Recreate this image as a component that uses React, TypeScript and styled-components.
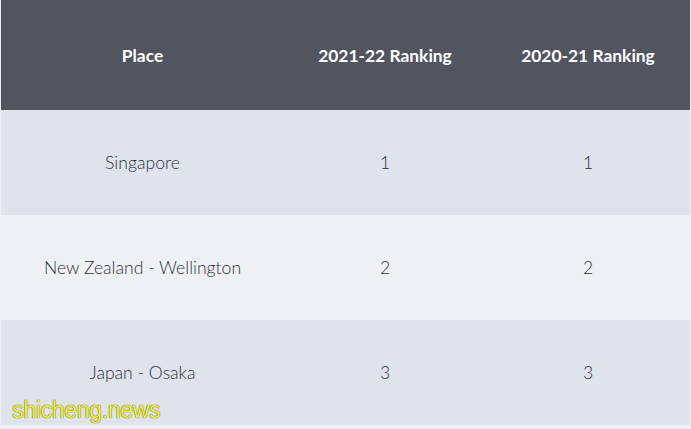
import * as React from 'react'
import styled, { createGlobalStyle } from 'styled-components'

const GlobalStyle = createGlobalStyle`
  html, body {
    margin: 0;
    padding: 0;
    background: #eef0f4;
  }
`

const Page = styled.div`
  position: relative;
  width: 691px;
  height: 429px;
  overflow: hidden;
  background: #eef0f4;
  font-family: 'Lato', 'Liberation Sans', sans-serif;
`

const Table = styled.table`
  margin-left: 1px;
  width: 689px;
  border-collapse: collapse;
  table-layout: fixed;
`

const HeadCell = styled.th<{ $width: number }>`
  width: ${(p) => p.$width}px;
  height: 110px;
  padding: 0;
  background: #52545f;
  color: #ffffff;
  font-size: 17.4px;
  font-weight: 700;
  text-align: center;
  vertical-align: middle;
`

const Row = styled.tr<{ $shade: boolean }>`
  height: 105px;
  background: ${(p) => (p.$shade ? '#dfe4ec' : '#eef0f4')};
`

const Cell = styled.td`
  padding: 0;
  color: #2e3038;
  font-size: 17.6px;
  font-weight: 300;
  text-align: center;
  vertical-align: middle;
`

const Watermark = styled.div`
  position: absolute;
  left: 12px;
  top: 397px;
  font-family: 'Liberation Sans', sans-serif;
  font-size: 23px;
  color: #f0ee3c;
  text-shadow: 0 0 1px #6a6a20, 0 0 1px #6a6a20;
  letter-spacing: -0.3px;
`

const rows = [
  { place: 'Singapore', now: 1, prev: 1 },
  { place: 'New Zealand - Wellington', now: 2, prev: 2 },
  { place: 'Japan - Osaka', now: 3, prev: 3 },
]

const App: React.FC = () => (
  <Page>
    <GlobalStyle />
    <Table>
      <thead>
        <tr>
          <HeadCell $width={283}>Place</HeadCell>
          <HeadCell $width={202}>2021-22 Ranking</HeadCell>
          <HeadCell $width={204}>2020-21 Ranking</HeadCell>
        </tr>
      </thead>
      <tbody>
        {rows.map((row, i) => (
          <Row key={row.place} $shade={i % 2 === 0}>
            <Cell>{row.place}</Cell>
            <Cell>{row.now}</Cell>
            <Cell>{row.prev}</Cell>
          </Row>
        ))}
      </tbody>
    </Table>
    <Watermark>shicheng.news</Watermark>
  </Page>
)

export default App
